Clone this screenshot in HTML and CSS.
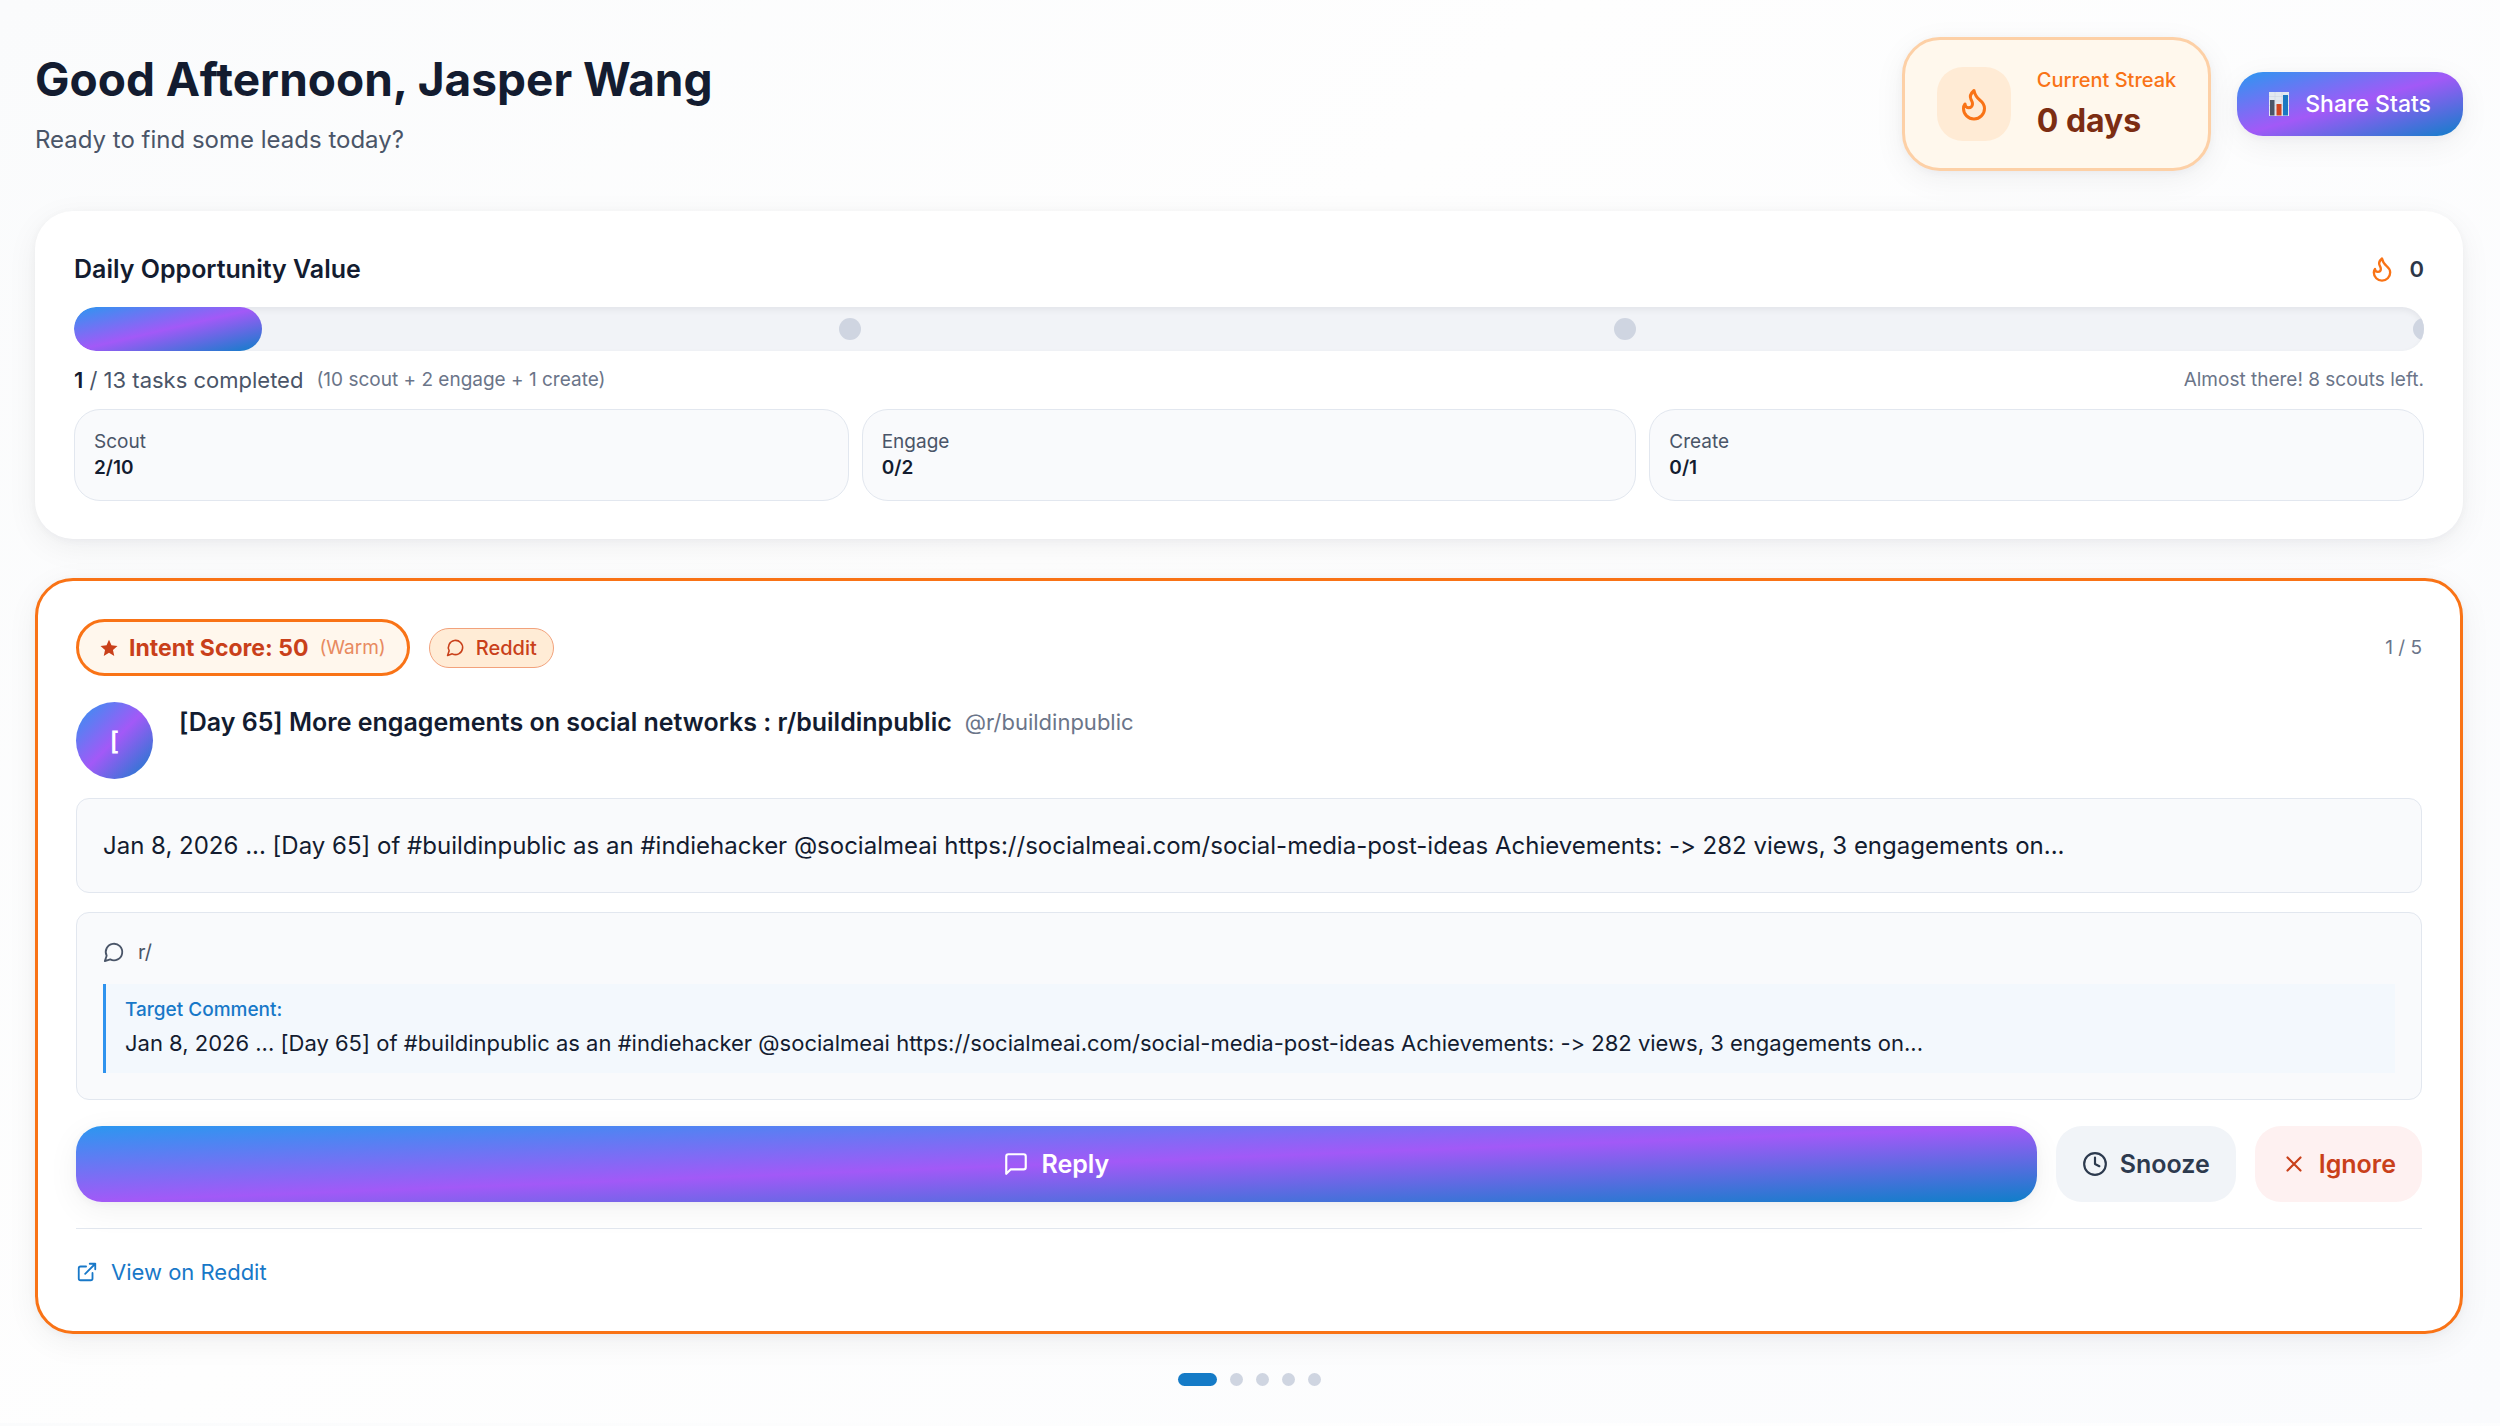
FILE: index.html
```html
<!DOCTYPE html>
<html lang="en">
<head>
  <meta charset="UTF-8">
  <meta name="viewport" content="width=device-width, initial-scale=1.0">
  <title>Dashboard</title>
  <link rel="stylesheet" href="styles.css">
</head>
<body>

  <!-- shared icon shapes -->
  <svg class="sprite" aria-hidden="true">
    <symbol id="flame" viewBox="0 0 24 24">
      <path d="M8.5 14.5A2.5 2.5 0 0 0 11 12c0-1.38-.5-2-1-3-1.072-2.143-.224-4.054 2-6 .5 2.5 2 4.9 4 6.5 2 1.6 3 3.5 3 5.5a7 7 0 1 1-14 0c0-1.153.433-2.294 1-3a2.5 2.5 0 0 0 2.5 2.5z"/>
    </symbol>
    <symbol id="bubble" viewBox="0 0 24 24">
      <path d="M7.9 20A9 9 0 1 0 4 16.1L2 22Z"/>
    </symbol>
  </svg>

  <header class="header">
    <div>
      <h1 class="greeting">Good Afternoon, Jasper Wang</h1>
      <p class="subtitle">Ready to find some leads today?</p>
    </div>
    <div class="header-right">
      <div class="streak">
        <div class="streak-icon">
          <svg class="icon icon-xl"><use href="#flame"/></svg>
        </div>
        <div class="streak-text">
          <div class="streak-label">Current Streak</div>
          <div class="streak-value">0 days</div>
        </div>
      </div>
      <button class="share" type="button">
        <svg class="chart" viewBox="0 0 20 24" aria-hidden="true">
          <rect width="20" height="24" fill="#e3e8f0"/>
          <path d="M0 4.5h20M0 9h20M0 13.5h20M0 18h20M6 0v24M13 0v24" stroke="#cbd3e0" stroke-width="0.5"/>
          <rect x="1" y="8" width="4.500" height="15.500" fill="#4b5568"/>
          <rect x="7.500" y="12" width="5" height="11.500" fill="#cf4420"/>
          <rect x="14" y="3" width="5" height="20.500" fill="#1a78c2"/>
        </svg>
        Share Stats
      </button>
    </div>
  </header>

  <section class="card progress-card">
    <div class="row">
      <h2 class="card-title">Daily Opportunity Value</h2>
      <div class="points">
        <svg class="icon icon-lg"><use href="#flame"/></svg>
        <span>0</span>
      </div>
    </div>
    <div class="bar" role="progressbar" aria-valuenow="8" aria-valuemin="0" aria-valuemax="100">
      <div class="bar-fill" style="width: 8%"></div>
      <span class="milestone" style="left: 33%"></span>
      <span class="milestone" style="left: 66%"></span>
      <span class="milestone" style="left: 100%"></span>
    </div>
    <div class="row tasks">
      <div class="tasks-left">
        <span><b>1</b> / 13 tasks completed</span>
        <span class="small">(10 scout + 2 engage + 1 create)</span>
      </div>
      <span class="small">Almost there! 8 scouts left.</span>
    </div>
    <div class="stats">
      <div class="stat">
        <div>Scout</div>
        <div class="stat-value">2/10</div>
      </div>
      <div class="stat">
        <div>Engage</div>
        <div class="stat-value">0/2</div>
      </div>
      <div class="stat">
        <div>Create</div>
        <div class="stat-value">0/1</div>
      </div>
    </div>
  </section>

  <article class="card lead">
    <div class="row">
      <div class="badges">
        <span class="score">
          <svg class="star" viewBox="0 0 24 24"><path d="M12 1l3.300 7.400 8 .8-6 5.400 1.700 7.900L12 18.400 5 22.500l1.700-7.900-6-5.400 8-.8z"/></svg>
          Intent Score: 50
          <span class="score-note">(Warm)</span>
        </span>
        <span class="source">
          <svg class="icon icon-sm"><use href="#bubble"/></svg>
          Reddit
        </span>
      </div>
      <span class="small">1 / 5</span>
    </div>

    <div class="author">
      <div class="avatar">[</div>
      <div class="author-text">
        <h3 class="author-name">[Day 65] More engagements on social networks : r/buildinpublic</h3>
        <span class="handle">@r/buildinpublic</span>
      </div>
    </div>

    <div class="box post">Jan 8, 2026 ... [Day 65] of #buildinpublic as an #indiehacker @socialmeai https://socialmeai.com/social-media-post-ideas Achievements: -&gt; 282 views, 3 engagements on...</div>

    <div class="box context">
      <div class="subreddit">
        <svg class="icon icon-md"><use href="#bubble"/></svg>
        r/
      </div>
      <div class="target">
        <div class="target-label">Target Comment:</div>
        <div class="target-text">Jan 8, 2026 ... [Day 65] of #buildinpublic as an #indiehacker @socialmeai https://socialmeai.com/social-media-post-ideas Achievements: -&gt; 282 views, 3 engagements on...</div>
      </div>
    </div>

    <div class="actions">
      <button class="btn btn-reply" type="button">
        <svg class="icon icon-btn" viewBox="0 0 24 24"><path d="M21 15a2 2 0 0 1-2 2H7l-4 4V5a2 2 0 0 1 2-2h14a2 2 0 0 1 2 2z"/></svg>
        Reply
      </button>
      <button class="btn btn-snooze" type="button">
        <svg class="icon icon-btn" viewBox="0 0 24 24"><circle cx="12" cy="12" r="10"/><path d="M12 6v6l4 2"/></svg>
        Snooze
      </button>
      <button class="btn btn-ignore" type="button">
        <svg class="icon icon-btn" viewBox="0 0 24 24"><path d="M18 6 6 18M6 6l12 12"/></svg>
        Ignore
      </button>
    </div>

    <div class="footer">
      <a class="view-link" href="#">
        <svg class="icon icon-link" viewBox="0 0 24 24"><path d="M15 3h6v6M10 14 21 3M18 13v6a2 2 0 0 1-2 2H5a2 2 0 0 1-2-2V8a2 2 0 0 1 2-2h6"/></svg>
        View on Reddit
      </a>
    </div>
  </article>

  <nav class="pager" aria-label="Leads">
    <button class="dot active" type="button" aria-label="Lead 1"></button>
    <button class="dot" type="button" aria-label="Lead 2"></button>
    <button class="dot" type="button" aria-label="Lead 3"></button>
    <button class="dot" type="button" aria-label="Lead 4"></button>
    <button class="dot" type="button" aria-label="Lead 5"></button>
  </nav>

</body>
</html>
```
FILE: styles.css
```css
:root {
  --gradient: linear-gradient(to bottom right, #2b97f0, #a259f7 50%, #0f7fc9);
  --shadow: 0 8px 32px rgba(15, 23, 42, 0.06), 0 2px 8px rgba(15, 23, 42, 0.04);
  --ink: #131c30;
  --slate: #4a5568;
  --muted: #6b7589;
  --line: #e2e7ef;
}

* {
  box-sizing: border-box;
}

body {
  margin: 0;
  padding: 37px 37px 37px 35px;
  background: linear-gradient(135deg, #fafbfc, #fefefe 40%, #fafbfd);
  color: var(--ink);
  font-family: Inter, "Liberation Sans", sans-serif;
  font-size: 22px;
  line-height: 32px;
  /* keep "->" as typed, no arrow */
  font-feature-settings: "calt" 0;
}

h1, h2, h3, p {
  margin: 0;
}

button {
  border: 0;
  font-family: inherit;
  cursor: pointer;
}

/* Icons */
.sprite {
  display: none;
}

.icon {
  flex: none;
  fill: none;
  stroke: currentColor;
  stroke-width: 2;
  stroke-linecap: round;
  stroke-linejoin: round;
}

.icon-xl { width: 36px; height: 36px; }
.icon-lg { width: 28px; height: 28px; }
.icon-md { width: 22px; height: 22px; }
.icon-sm { width: 19px; height: 19px; }
.icon-link { width: 22px; height: 22px; }
.icon-btn { width: 26px; height: 26px; }

/* Header */
.header {
  display: flex;
  justify-content: space-between;
  align-items: center;
  margin-bottom: 40px;
}

.greeting {
  font-size: 46px;
  line-height: 58px;
  font-weight: 700;
}

.subtitle {
  margin-top: 13px;
  color: var(--slate);
  font-size: 24px;
  line-height: 38px;
}

.header-right {
  display: flex;
  align-items: center;
  gap: 26px;
}

.streak {
  display: flex;
  align-items: center;
  gap: 26px;
  padding: 26px 32px;
  border: 3px solid #fdd0a6;
  border-radius: 38px;
  background: #fff8ed;
  box-shadow: var(--shadow);
}

.streak-icon {
  display: flex;
  align-items: center;
  justify-content: center;
  width: 74px;
  height: 74px;
  border-radius: 26px;
  background: #ffebd5;
  color: #f97316;
}

.streak-label {
  color: #f97316;
  font-size: 20px;
  line-height: 28px;
  font-weight: 500;
}

.streak-value {
  margin-top: 6px;
  color: #7c2d12;
  font-size: 32px;
  line-height: 42px;
  font-weight: 700;
}

.share {
  display: flex;
  align-items: center;
  gap: 16px;
  height: 64px;
  padding: 0 32px;
  border-radius: 26px;
  background: var(--gradient);
  box-shadow: var(--shadow);
  color: #fff;
  font-size: 23px;
  font-weight: 500;
}

.chart {
  width: 20px;
  height: 24px;
}

/* Cards */
.card {
  border-radius: 38px;
  background: #fff;
  box-shadow: var(--shadow);
}

.row {
  display: flex;
  justify-content: space-between;
  align-items: center;
}

.small {
  color: var(--muted);
  font-size: 19px;
}

.progress-card {
  padding: 39px 39px 38px;
}

.card-title {
  font-size: 25px;
  line-height: 38px;
  font-weight: 600;
}

.points {
  display: flex;
  align-items: center;
  gap: 13px;
  color: #2d3748;
  font-weight: 600;
}

.points .icon {
  color: #f97316;
}

.bar {
  position: relative;
  height: 44px;
  margin: 19px 0 13px;
  overflow: hidden;
  border-radius: 22px;
  background: #f1f3f7;
  box-shadow: inset 0 3px 6px rgba(15, 23, 42, 0.06);
}

.bar-fill {
  height: 100%;
  border-radius: 22px;
  background: var(--gradient);
}

.milestone {
  position: absolute;
  top: 11px;
  width: 22px;
  height: 22px;
  margin-left: -11px;
  border-radius: 50%;
  background: #cfd5e1;
}

.tasks {
  margin-bottom: 13px;
}

.tasks-left {
  display: flex;
  gap: 13px;
  color: var(--slate);
}

.tasks-left b {
  color: var(--ink);
  font-weight: 600;
}

.stats {
  display: flex;
  gap: 13px;
}

.stat {
  flex: 1;
  padding: 19px;
  border: 1px solid var(--line);
  border-radius: 26px;
  background: #f9fafc;
  color: var(--slate);
  font-size: 19px;
  line-height: 26px;
}

.stat-value {
  color: var(--ink);
  font-weight: 600;
}

/* Lead */
.lead {
  margin-top: 39px;
  padding: 38px;
  border: 3px solid #f97316;
}

.badges {
  display: flex;
  align-items: center;
  gap: 19px;
}

.score {
  display: flex;
  align-items: center;
  gap: 11px;
  height: 57px;
  padding: 0 21px;
  border: 3px solid #f97316;
  border-radius: 29px;
  background: #fff7ed;
  color: #c9401a;
  font-size: 23px;
  font-weight: 700;
}

.star {
  width: 18px;
  height: 18px;
  fill: currentColor;
}

.score-note {
  color: #e88a60;
  font-size: 19px;
  font-weight: 400;
}

.source {
  display: flex;
  align-items: center;
  gap: 11px;
  height: 40px;
  padding: 0 16px;
  border: 1px solid #f2a27c;
  border-radius: 20px;
  background: #ffecd6;
  color: #c9401a;
  font-size: 20px;
  font-weight: 500;
}

.author {
  display: flex;
  gap: 26px;
  margin: 26px 0 19px;
}

.avatar {
  display: flex;
  align-items: center;
  justify-content: center;
  width: 77px;
  height: 77px;
  border-radius: 50%;
  background: var(--gradient);
  color: #fff;
  font-size: 25px;
  font-weight: 600;
}

.author-text {
  display: flex;
  align-items: center;
  gap: 13px;
  height: 40px;
}

.author-name {
  font-size: 25px;
  font-weight: 600;
}

.handle {
  color: var(--muted);
}

.box {
  padding: 26px;
  border: 1px solid var(--line);
  border-radius: 13px;
  background: #f9fafc;
}

.post {
  margin-bottom: 19px;
  font-size: 24px;
  line-height: 41px;
}

.subreddit {
  display: flex;
  align-items: center;
  gap: 13px;
  height: 26px;
  margin-bottom: 19px;
  color: var(--slate);
  font-size: 20px;
}

.target {
  padding: 13px 19px;
  border-left: 3px solid #2f93ee;
  background: #f3f8fd;
}

.target-label {
  color: #1878c8;
  font-size: 19px;
  line-height: 26px;
  font-weight: 500;
}

.target-text {
  margin-top: 3px;
  line-height: 34px;
}

.actions {
  display: flex;
  gap: 19px;
  margin: 26px 0;
}

.btn {
  display: flex;
  align-items: center;
  justify-content: center;
  gap: 12px;
  height: 76px;
  padding: 0 26px;
  border-radius: 26px;
  font-size: 25px;
  font-weight: 600;
}

.btn-reply {
  flex: 1;
  background: var(--gradient);
  box-shadow: var(--shadow);
  color: #fff;
}

.btn-snooze {
  background: #f1f4f8;
  color: #2d3a4e;
}

.btn-ignore {
  background: #fef1f1;
  color: #c9401a;
}

.footer {
  display: flex;
  padding: 27px 0 5px;
  border-top: 1px solid var(--line);
}

.view-link {
  display: flex;
  align-items: center;
  gap: 13px;
  color: #1878c8;
  text-decoration: none;
}

/* Pager */
.pager {
  display: flex;
  justify-content: center;
  gap: 13px;
  margin-top: 39px;
}

.dot {
  width: 13px;
  height: 13px;
  padding: 0;
  border-radius: 7px;
  background: #cfd5e1;
}

.dot.active {
  width: 39px;
  background: #157bc7;
}
```
